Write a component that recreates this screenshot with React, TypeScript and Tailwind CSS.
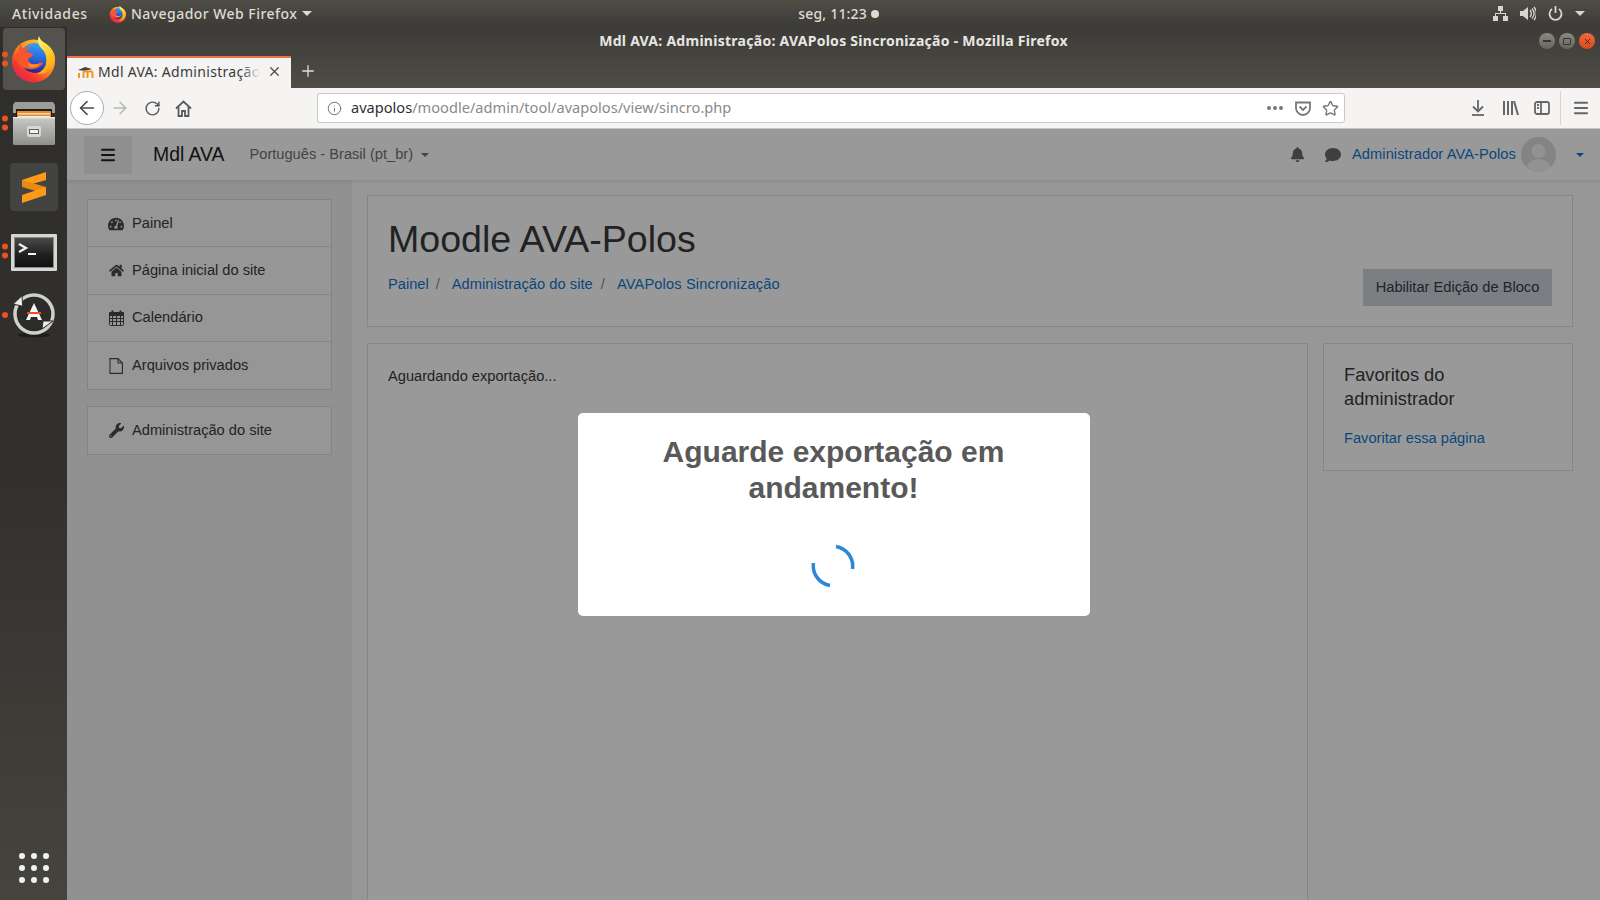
import { ArrowLeft, ArrowRight, Info, Menu, Plus, RotateCw, Star, X } from 'lucide-react'
import { FaBell, FaComment, FaHome, FaTachometerAlt, FaWrench } from 'react-icons/fa'
import type { ReactNode } from 'react'

const ubuntu = 'font-["Noto_Sans",sans-serif]'
const arial = 'font-["Liberation_Sans",sans-serif]'

function FirefoxLogo({ size, id }: { size: number; id: string }) {
  return (
    <svg width={size} height={size} viewBox="0 0 48 48">
      <defs>
        <linearGradient id={`${id}-a`} x1="0.85" y1="0.1" x2="0.2" y2="0.95">
          <stop offset="0" stopColor="#ffcb2e" />
          <stop offset="0.45" stopColor="#ff8a1f" />
          <stop offset="0.8" stopColor="#f5362e" />
          <stop offset="1" stopColor="#e5245e" />
        </linearGradient>
        <linearGradient id={`${id}-b`} x1="0.6" y1="0" x2="0.5" y2="1">
          <stop offset="0" stopColor="#35a4f5" />
          <stop offset="0.55" stopColor="#2a63d6" />
          <stop offset="1" stopColor="#2d1f8f" />
        </linearGradient>
        <linearGradient id={`${id}-c`} x1="0.3" y1="0" x2="0.7" y2="1">
          <stop offset="0" stopColor="#fff176" />
          <stop offset="0.6" stopColor="#ffc51f" />
          <stop offset="1" stopColor="#ff9a1a" />
        </linearGradient>
      </defs>
      <circle cx="23.5" cy="26" r="21.5" fill={`url(#${id}-a)`} />
      <circle cx="25" cy="23" r="15" fill={`url(#${id}-b)`} />
      <path d="M10 8c1 3 2 5 5 6 2-2 5-3 8-3-3 1-6 3-7 6 3 0 7 1 7 3-1 2-4 2-5 4 0 4 5 6 9 5 3-1 5-2 6-1-2 4-8 7-14 6C9 33 4 24 8 16c1-3 2-5 2-8z" fill="#f9552f" />
      <path d="M18 28c3 2 8 2 12 0-2 3-5 5-9 4-2 0-3-2-3-4z" fill="#ff9a1a" />
      <path d="M29 1c-2 5-1 9 3 13 4 4 5 9 4 15-1 4-5 8-9 10 8 0 14-3 17-10 3-9-2-16-8-20-3-2-6-4-7-8z" fill={`url(#${id}-c)`} />
    </svg>
  )
}

function Dock() {
  const Dots = ({ n }: { n: number }) => (
    <div className="absolute left-[2px] top-1/2 flex -translate-y-1/2 flex-col gap-[3px]">
      {Array.from({ length: n }).map((_, i) => (
        <span key={i} className="h-[6px] w-[6px] rounded-full bg-[#e95420]" />
      ))}
    </div>
  )
  return (
    <div className="flex w-[67px] shrink-0 flex-col bg-gradient-to-b from-[#2f2e2b] via-[#31302c] to-[#46443f]">
      <div className="relative flex h-[64px] items-center justify-center">
        <div className="flex h-[62px] w-[62px] items-center justify-center rounded-[4px] bg-[#54524c]">
          <FirefoxLogo size={48} id="dock" />
        </div>
        <Dots n={2} />
      </div>
      <div className="relative flex h-[64px] items-center justify-center">
        <svg width="44" height="46" viewBox="0 0 44 46">
          <defs>
            <linearGradient id="cabinet" x1="0" y1="0" x2="0" y2="1">
              <stop offset="0" stopColor="#c9c9c7" />
              <stop offset="1" stopColor="#8f8f8d" />
            </linearGradient>
          </defs>
          <path d="M3 2h38l2 3v8H1V5z" fill="#9c9c9a" />
          <path d="M4 9h36v8H4z" fill="#1d1d1b" />
          <path d="M5 11h34v8H5z" fill="#e8892f" />
          <path d="M6 13h32v1.500H6z" fill="#f8d9a8" />
          <path d="M6 16h32v1.500H6z" fill="#fbe9cf" />
          <path d="M1 17h42v27l-1 1H2l-1-1z" fill="url(#cabinet)" />
          <path d="M1 17h42v1.500H1z" fill="#e4e4e2" />
          <rect x="15" y="26" width="14" height="11" rx="2" fill="#d8d8d6" />
          <rect x="17" y="29" width="10" height="5" fill="#5e5e5c" />
          <rect x="18" y="30" width="8" height="3" fill="#f2f2f2" />
        </svg>
        <Dots n={2} />
      </div>
      <div className="flex h-[64px] items-center justify-center">
        <div className="flex h-[48px] w-[48px] items-center justify-center rounded-[4px] bg-[#434341]">
          <svg width="24" height="31" viewBox="0 0 24 31">
            <path d="M24 0v8L0 15V8z" fill="#ff9a18" />
            <path d="M0 15l24 7v-7L0 8z" fill="#e88a12" />
            <path d="M24 15v8L0 31v-8z" fill="#ff9a18" />
          </svg>
        </div>
      </div>
      <div className="relative flex h-[64px] items-center justify-center pt-[3px]">
        <svg width="46" height="37" viewBox="0 0 46 37">
          <defs>
            <linearGradient id="term" x1="0" y1="0" x2="0" y2="1">
              <stop offset="0" stopColor="#4a4a4a" />
              <stop offset="0.6" stopColor="#1e1e1e" />
              <stop offset="1" stopColor="#111" />
            </linearGradient>
          </defs>
          <rect x="0" y="0" width="46" height="37" rx="1" fill="#d6d6d4" />
          <rect x="3" y="3" width="40" height="31" fill="#8a8a88" />
          <rect x="4" y="4" width="38" height="29" fill="url(#term)" />
          <path d="M8 10l7 4-7 4" stroke="#f2f2f2" strokeWidth="2.200" fill="none" />
          <path d="M17 20h8" stroke="#f2f2f2" strokeWidth="2" />
        </svg>
        <Dots n={2} />
      </div>
      <div className="relative flex h-[64px] items-center justify-center">
        <svg width="44" height="46" viewBox="0 0 44 46">
          <ellipse cx="22" cy="43" rx="16" ry="2.500" fill="#1f1e1c" />
          <circle cx="22" cy="22" r="17" fill="#2c2b29" />
          <circle cx="22" cy="22" r="19" stroke="#cfcfcd" strokeWidth="3.500" fill="none" />
          <path d="M1.300 12L10 3.700l0.700 10.600z" fill="#ececec" stroke="#2c2b29" strokeWidth="1" />
          <path d="M30 37l11-8H31z" fill="#ececec" stroke="#2c2b29" strokeWidth="1" />
          <path d="M22 11l8 17h-4l-1-3h-6l-1 3h-4z" fill="#f6f6f6" />
          <path d="M15 20h14v2H15z" fill="#e95420" />
        </svg>
        <Dots n={1} />
      </div>
      <div className="mt-auto mb-[17px] grid grid-cols-3 gap-x-[6px] gap-y-[6px] self-center">
        {Array.from({ length: 9 }).map((_, i) => (
          <span key={i} className="h-[6px] w-[6px] rounded-full bg-[#f2f2f0]" />
        ))}
      </div>
    </div>
  )
}

function TopBar() {
  return (
    <div className={`flex h-[27px] shrink-0 items-center bg-gradient-to-b from-[#4f4d46] to-[#3c3b37] text-[14px] font-medium text-[#dfdbd2] ${ubuntu}`}>
      <span className="ml-[12px] w-[97px] tracking-[0.6px]">Atividades</span>
      <FirefoxLogo size={18} id="top" />
      <span className="ml-[4px] tracking-[0.45px]">Navegador Web Firefox</span>
      <span className="ml-[5px] h-0 w-0 border-x-[5px] border-t-[5px] border-x-transparent border-t-[#dfdbd2]" />
      <div className="ml-[486px] flex items-center gap-[4px] tracking-[0.2px]">
        <span>seg, 11:23</span>
        <span className="h-[8px] w-[8px] rounded-full bg-[#dfdbd2]" />
      </div>
      <div className="ml-auto mr-[15px] flex items-center gap-[12px]">
        <svg width="15" height="15" viewBox="0 0 15 15" fill="#d8d5cc">
          <path d="M5 0h5v5H8v2h5v3h2v5h-5v-5h2V8H3v2h2v5H0v-5h2V7h5V5H5z" />
        </svg>
        <svg width="16" height="15" viewBox="0 0 16 15" fill="#d8d5cc">
          <path d="M0 5h3l5-4v13l-5-4H0z" />
          <path d="M10 4c1.500 2 1.500 5 0 7M12 2.500c2.500 3 2.500 7 0 10M14 1c3 4 3 9 0 13" stroke="#d8d5cc" strokeWidth="1.300" fill="none" />
        </svg>
        <svg width="15" height="15" viewBox="0 0 15 15" fill="none" stroke="#d8d5cc" strokeWidth="1.800">
          <path d="M4 3a6 6 0 1 0 7 0" />
          <path d="M7.500 0v7" />
        </svg>
        <span className="h-0 w-0 border-x-[5px] border-t-[5px] border-x-transparent border-t-[#d8d5cc]" />
      </div>
    </div>
  )
}

function WindowHeader() {
  return (
    <div className="h-[61px] shrink-0 bg-gradient-to-b from-[#3c3b37] to-[#504d47]">
      <div className={`relative flex h-[29px] items-center justify-center pb-[2px] text-[14px] font-bold tracking-[0.27px] text-[#e8e6e1] ${ubuntu}`}>
        Mdl AVA: Administração: AVAPolos Sincronização - Mozilla Firefox
        <div className="absolute right-[5px] top-[6px] flex gap-[4px]">
          <span className="flex h-[16px] w-[16px] items-center justify-center rounded-full bg-gradient-to-b from-[#8a8983] to-[#65645e]">
            <span className="h-[1.500px] w-[8px] bg-[#35342f]" />
          </span>
          <span className="flex h-[16px] w-[16px] items-center justify-center rounded-full bg-gradient-to-b from-[#8a8983] to-[#65645e]">
            <span className="h-[7px] w-[8px] rounded-[1px] border border-[#35342f]" />
          </span>
          <span className="flex h-[16px] w-[16px] items-center justify-center rounded-full bg-gradient-to-b from-[#f0693a] to-[#d84a1c]">
            <X size={9} strokeWidth={2.500} color="#3a241c" />
          </span>
        </div>
      </div>
      <div className="flex h-[32px] items-end">
        <div className={`relative flex h-[32px] w-[224px] items-center border-t-2 border-[#f0714b] bg-[#f5f4f2] pb-[3px] pl-[10px] text-[14px] tracking-[0.3px] text-[#3a3a3a] ${ubuntu}`}>
          <svg width="18" height="14" viewBox="0 0 18 14" className="shrink-0">
            <path d="M1 5l7-3 7 2-7 2z" fill="#444" />
            <path d="M6.500 13V8.500c0-3 4-3 4 0V13M10.500 13V8.500c0-3 5-3 5 0V13" stroke="#f7941e" strokeWidth="2" fill="none" />
            <path d="M2 13V8" stroke="#f7941e" strokeWidth="2" />
          </svg>
          <span className="ml-[3px] w-[166px] overflow-hidden whitespace-nowrap">Mdl AVA: Administração: AVAPolos</span>
          <span className="absolute left-[174px] top-[2px] h-[24px] w-[24px] bg-gradient-to-r from-transparent to-[#f5f4f2] to-80%" />
          <X size={15} strokeWidth={2} color="#4a4a48" className="ml-[3px] shrink-0" />
        </div>
        <div className="flex h-[32px] w-[34px] items-center justify-center pb-[3px]">
          <Plus size={18} strokeWidth={1.700} color="#e2e0dc" />
        </div>
      </div>
    </div>
  )
}

function Toolbar() {
  return (
    <div className="flex h-[41px] shrink-0 items-center border-b border-[#c9c8c6] bg-[#f5f4f2] text-[#5a5a5a]">
      <div className="ml-[3px] flex h-[34px] w-[34px] items-center justify-center rounded-full border border-[#aeaeae] bg-white">
        <ArrowLeft size={22} strokeWidth={1.700} color="#4a4a4a" />
      </div>
      <ArrowRight size={20} strokeWidth={1.700} color="#b5b5b5" className="ml-[6px]" />
      <RotateCw size={17} strokeWidth={2.100} color="#5a5a5a" className="ml-[14px]" />
      <svg width="17" height="17" viewBox="0 0 17 17" fill="none" stroke="#5a5a5a" strokeWidth="1.800" className="ml-[14px]">
        <path d="M1 8.500l7.500-7 7.500 7" />
        <path d="M3.500 7v9h3.500v-5h3v5h3.500V7" />
      </svg>
      <div className="ml-[125px] flex h-[30px] w-[1028px] items-center rounded-[3px] border border-[#c9c9c8] bg-white pr-[5px]">
        <Info size={15} strokeWidth={1.500} color="#6a6a6a" className="ml-[9px]" />
        <span className={`ml-[9px] text-[14.600px] text-[#8a8a8a] ${ubuntu}`}>
          <span className="text-[#303030]">avapolos</span>/moodle/admin/tool/avapolos/view/sincro.php
        </span>
        <div className="ml-auto flex items-center">
          <div className="flex gap-[2px]">
            <span className="h-[4px] w-[4px] rounded-full bg-[#777]" />
            <span className="h-[4px] w-[4px] rounded-full bg-[#777]" />
            <span className="h-[4px] w-[4px] rounded-full bg-[#777]" />
          </div>
          <svg width="16" height="15" viewBox="0 0 16 15" fill="none" stroke="#777" strokeWidth="1.800" className="ml-[12px]">
            <path d="M1 1.500h14v5.500a7 7 0 0 1-14 0z" />
            <path d="M4.500 5.500L8 9l3.500-3.500" />
          </svg>
          <Star size={17} strokeWidth={2} color="#777" className="ml-[11px]" />
        </div>
      </div>
      <svg width="14" height="16" viewBox="0 0 14 16" fill="none" stroke="#666" strokeWidth="1.800" className="ml-[126px]">
        <path d="M7 0v11M2 6.500L7 11.500l5-5" />
        <path d="M1 15h12" />
      </svg>
      <svg width="16" height="14" viewBox="0 0 16 14" fill="none" stroke="#666" strokeWidth="2" className="ml-[18px]">
        <path d="M1 0v14M5 0v14M9 0v14M11 0l4 14" />
      </svg>
      <svg width="16" height="14" viewBox="0 0 16 14" fill="none" stroke="#666" strokeWidth="1.800" className="ml-[15px]">
        <rect x="1" y="1" width="14" height="12" rx="2" />
        <path d="M7 1v12M3 4h2M3 7h2" />
      </svg>
      <span className="ml-[10px] h-[34px] w-px bg-[#d6d5d3]" />
      <Menu size={18} strokeWidth={2.800} color="#666" className="ml-[11px]" />
    </div>
  )
}

function NavItem({ icon, label }: { icon: ReactNode; label: string }) {
  return (
    <div className="flex h-[47.250px] items-center border-b border-black/12 last:border-b-0">
      <span className="ml-[20px] flex w-[16px] justify-center text-[#454a4d]">{icon}</span>
      <span className="ml-[8px]">{label}</span>
    </div>
  )
}

function Moodle() {
  return (
    <div className={`flex min-h-0 flex-1 flex-col bg-white text-[14.650px] text-[#373a3c] ${arial}`}>
      <header className="relative z-10 flex h-[51px] shrink-0 items-center shadow-[0_2px_4px_rgba(0,0,0,0.08)]">
        <div className="ml-[17px] flex h-[38px] w-[48px] items-center justify-center bg-[#eeeeee]">
          <Menu size={18} strokeWidth={2.800} color="#222" />
        </div>
        <span className="ml-[21px] text-[19.400px] text-[#222]">Mdl AVA</span>
        <span className="ml-[25px] text-[#6f7275]">Português - Brasil (pt_br)</span>
        <span className="ml-[8px] h-0 w-0 border-x-[4px] border-t-[4px] border-x-transparent border-t-[#6f7275]" />
        <div className="ml-auto flex items-center">
          <FaBell size={15} color="#6a6a6a" />
          <FaComment size={16} color="#6a6a6a" className="ml-[20px]" />
          <span className="ml-[11px] tracking-[0.08px] text-[#1177d1]">Administrador AVA-Polos</span>
          <svg width="35" height="35" viewBox="0 0 35 35" className="ml-[5px]">
            <clipPath id="avatar"><circle cx="17.500" cy="17.500" r="17.500" /></clipPath>
            <g clipPath="url(#avatar)">
              <rect width="35" height="35" fill="#dcdcdc" />
              <circle cx="17.500" cy="14" r="7" fill="#f4f4f4" />
              <ellipse cx="17.500" cy="32" rx="12" ry="10" fill="#f4f4f4" />
            </g>
          </svg>
          <span className="ml-[20px] mr-[16px] h-0 w-0 border-x-[4px] border-t-[4px] border-x-transparent border-t-[#1177d1]" />
        </div>
      </header>

      <div className="flex min-h-0 flex-1">
        <aside className="w-[285px] shrink-0 bg-[#f2f2f2] px-[20px] pt-[19px]">
          <div className="border border-black/12 bg-[#fbfbfb] [&>div]:pt-[1px]">
            <NavItem icon={<FaTachometerAlt size={16} />} label="Painel" />
            <NavItem icon={<FaHome size={15} />} label="Página inicial do site" />
            <NavItem
              icon={
                <svg width="15" height="16" viewBox="0 0 15 16" fill="none" stroke="currentColor" strokeWidth="1">
                  <rect x="0.500" y="2.500" width="14" height="13" rx="1" />
                  <path d="M0.500 2.500h14v3h-14z" fill="currentColor" />
                  <path d="M0.500 8.500h14M0.500 11.500h14M3.500 5.500v10M7.500 5.500v10M11.500 5.500v10" />
                  <path d="M3.500 0.500v3M11.500 0.500v3" strokeWidth="2" />
                </svg>
              }
              label="Calendário"
            />
            <NavItem
              icon={
                <svg width="14" height="16" viewBox="0 0 14 16" fill="none" stroke="currentColor" strokeWidth="1.100">
                  <path d="M1 0.600h8l4.400 4.400v10.400H1z" />
                  <path d="M9 0.600v4.400h4.400" />
                </svg>
              }
              label="Arquivos privados"
            />
          </div>
          <div className="mt-[16px] border border-black/12 bg-[#fbfbfb]">
            <NavItem icon={<FaWrench size={15} />} label="Administração do site" />
          </div>
        </aside>

        <main className="flex min-w-0 flex-1 flex-col gap-[16px] bg-[#fcfcfc] pl-[15px] pr-[27px] pt-[15px]">
          <section className="relative h-[132px] shrink-0 border border-black/12 bg-white pl-[20px] pt-[19px]">
            <h1 className="text-[37.600px] leading-[48px] text-[#373a3c]">Moodle AVA-Polos</h1>
            <nav className="mt-[11px] flex items-center text-[#1177d1]">
              <span>Painel</span>
              <span className="ml-[7px] mr-[12px] text-[#818a91]">/</span>
              <span className="tracking-[0.05px]">Administração do site</span>
              <span className="ml-[8px] mr-[12px] text-[#818a91]">/</span>
              <span className="tracking-[0.14px]">AVAPolos Sincronização</span>
            </nav>
            <div className="absolute bottom-[20px] right-[20px] flex h-[37px] w-[189px] items-center justify-center bg-[#ced4da] text-[#373a3c]">
              Habilitar Edição de Bloco
            </div>
          </section>
          <div className="flex min-h-0 flex-1 gap-[15px]">
            <section className="-mb-[10px] flex-1 border border-black/12 bg-white pl-[20px] pt-[22px]">
              Aguardando exportação...
            </section>
            <section className="h-[128px] w-[250px] shrink-0 border border-black/12 bg-white pl-[20px] pt-[19px]">
              <h5 className="text-[18.250px] leading-[24px]">Favoritos do<br />administrador</h5>
              <p className="mt-[17px] text-[#1177d1]">Favoritar essa página</p>
            </section>
          </div>
        </main>
      </div>
    </div>
  )
}

function Modal() {
  return (
    <div className={`absolute inset-0 z-20 flex justify-center bg-black/40 pt-[284px] ${arial}`}>
      <div className="flex h-[203px] w-[512px] flex-col items-center rounded-[5px] bg-white pt-[21px]">
        <h2 className="w-[440px] text-center text-[30px] font-bold leading-[36px] text-[#595959]">
          Aguarde exportação em andamento!
        </h2>
        <svg width="44" height="44" viewBox="0 0 44 44" className="mr-[2px] mt-[38px]">
          <path d="M25 2.500A20 20 0 0 1 41.500 25M19 41.500A20 20 0 0 1 2.500 19" stroke="#2f86d8" strokeWidth="3.500" strokeLinecap="butt" fill="none" />
        </svg>
      </div>
    </div>
  )
}

export default function App() {
  return (
    <div className="flex h-[900px] w-[1600px] flex-col overflow-hidden">
      <TopBar />
      <div className="flex min-h-0 flex-1">
        <Dock />
        <div className="flex min-w-0 flex-1 flex-col">
          <WindowHeader />
          <Toolbar />
          <div className="relative flex min-h-0 flex-1 flex-col">
            <Moodle />
            <Modal />
          </div>
        </div>
      </div>
    </div>
  )
}
